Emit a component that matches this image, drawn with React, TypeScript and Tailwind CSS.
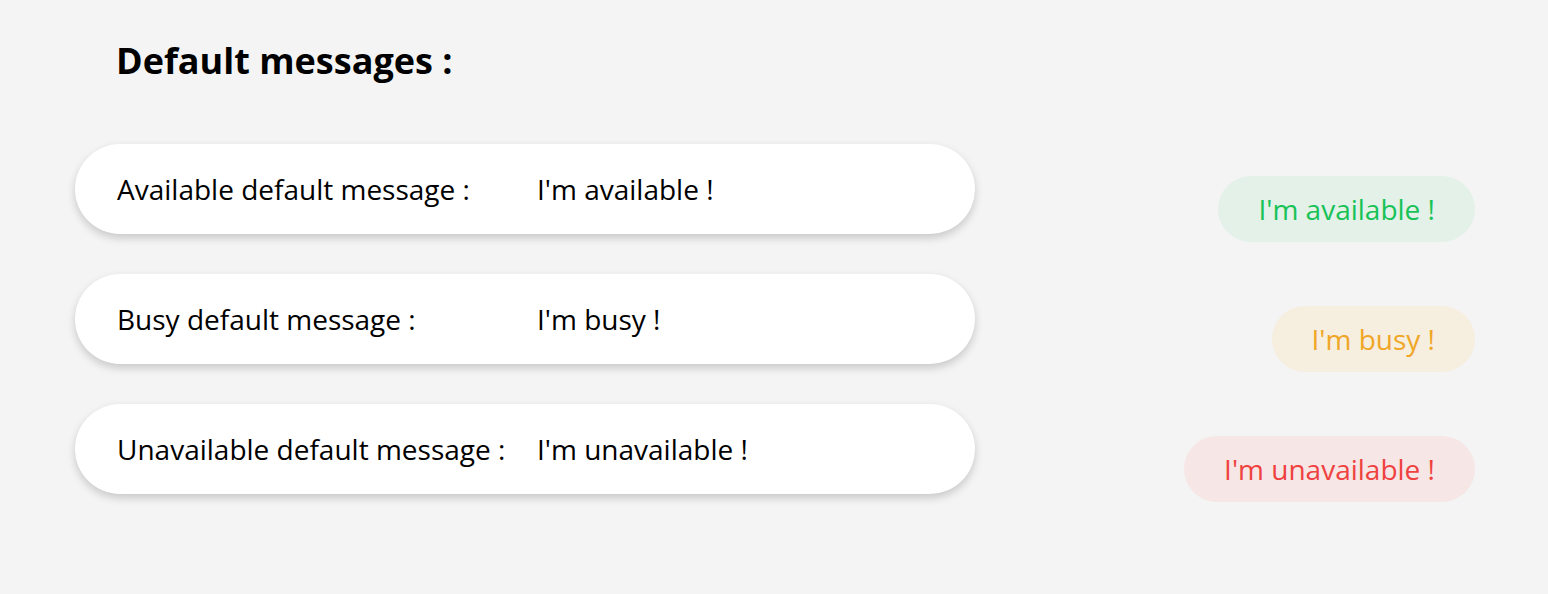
const ROWS = [
  {
    label: 'Available default message :',
    value: "I'm available !",
    badge: 'bg-[#e3f1e8] text-[#17c257]',
  },
  {
    label: 'Busy default message :',
    value: "I'm busy !",
    badge: 'bg-[#f6eedf] text-[#f0a626]',
  },
  {
    label: 'Unavailable default message :',
    value: "I'm unavailable !",
    badge: 'bg-[#f6e6e5] text-[#ef4240]',
  },
];

export default function App() {
  return (
    <div
      className="h-[594px] bg-[#f4f4f4] pl-[75px] pr-[73px] text-black"
      style={{ fontFamily: '"Open Sans", sans-serif' }}
    >
      <h1 className="pl-[41px] pt-[34px] text-[36px] font-bold leading-[54px]">Default messages :</h1>

      <div className="mt-[56px] flex flex-col gap-[32px]">
        {ROWS.map(row => (
          <div key={row.label} className="flex items-start justify-between">
            <div className="flex h-[90px] w-[900px] items-center rounded-full bg-white pl-[42px] shadow-[0_4px_8px_rgba(0,0,0,0.18)]">
              <span className="w-[420px] text-[28px]">{row.label}</span>
              <span className="text-[28px]">{row.value}</span>
            </div>
            <div
              className={`mt-[32px] flex h-[66px] items-center rounded-full px-[40px] text-[28px] ${row.badge}`}
            >
              {row.value}
            </div>
          </div>
        ))}
      </div>
    </div>
  );
}
